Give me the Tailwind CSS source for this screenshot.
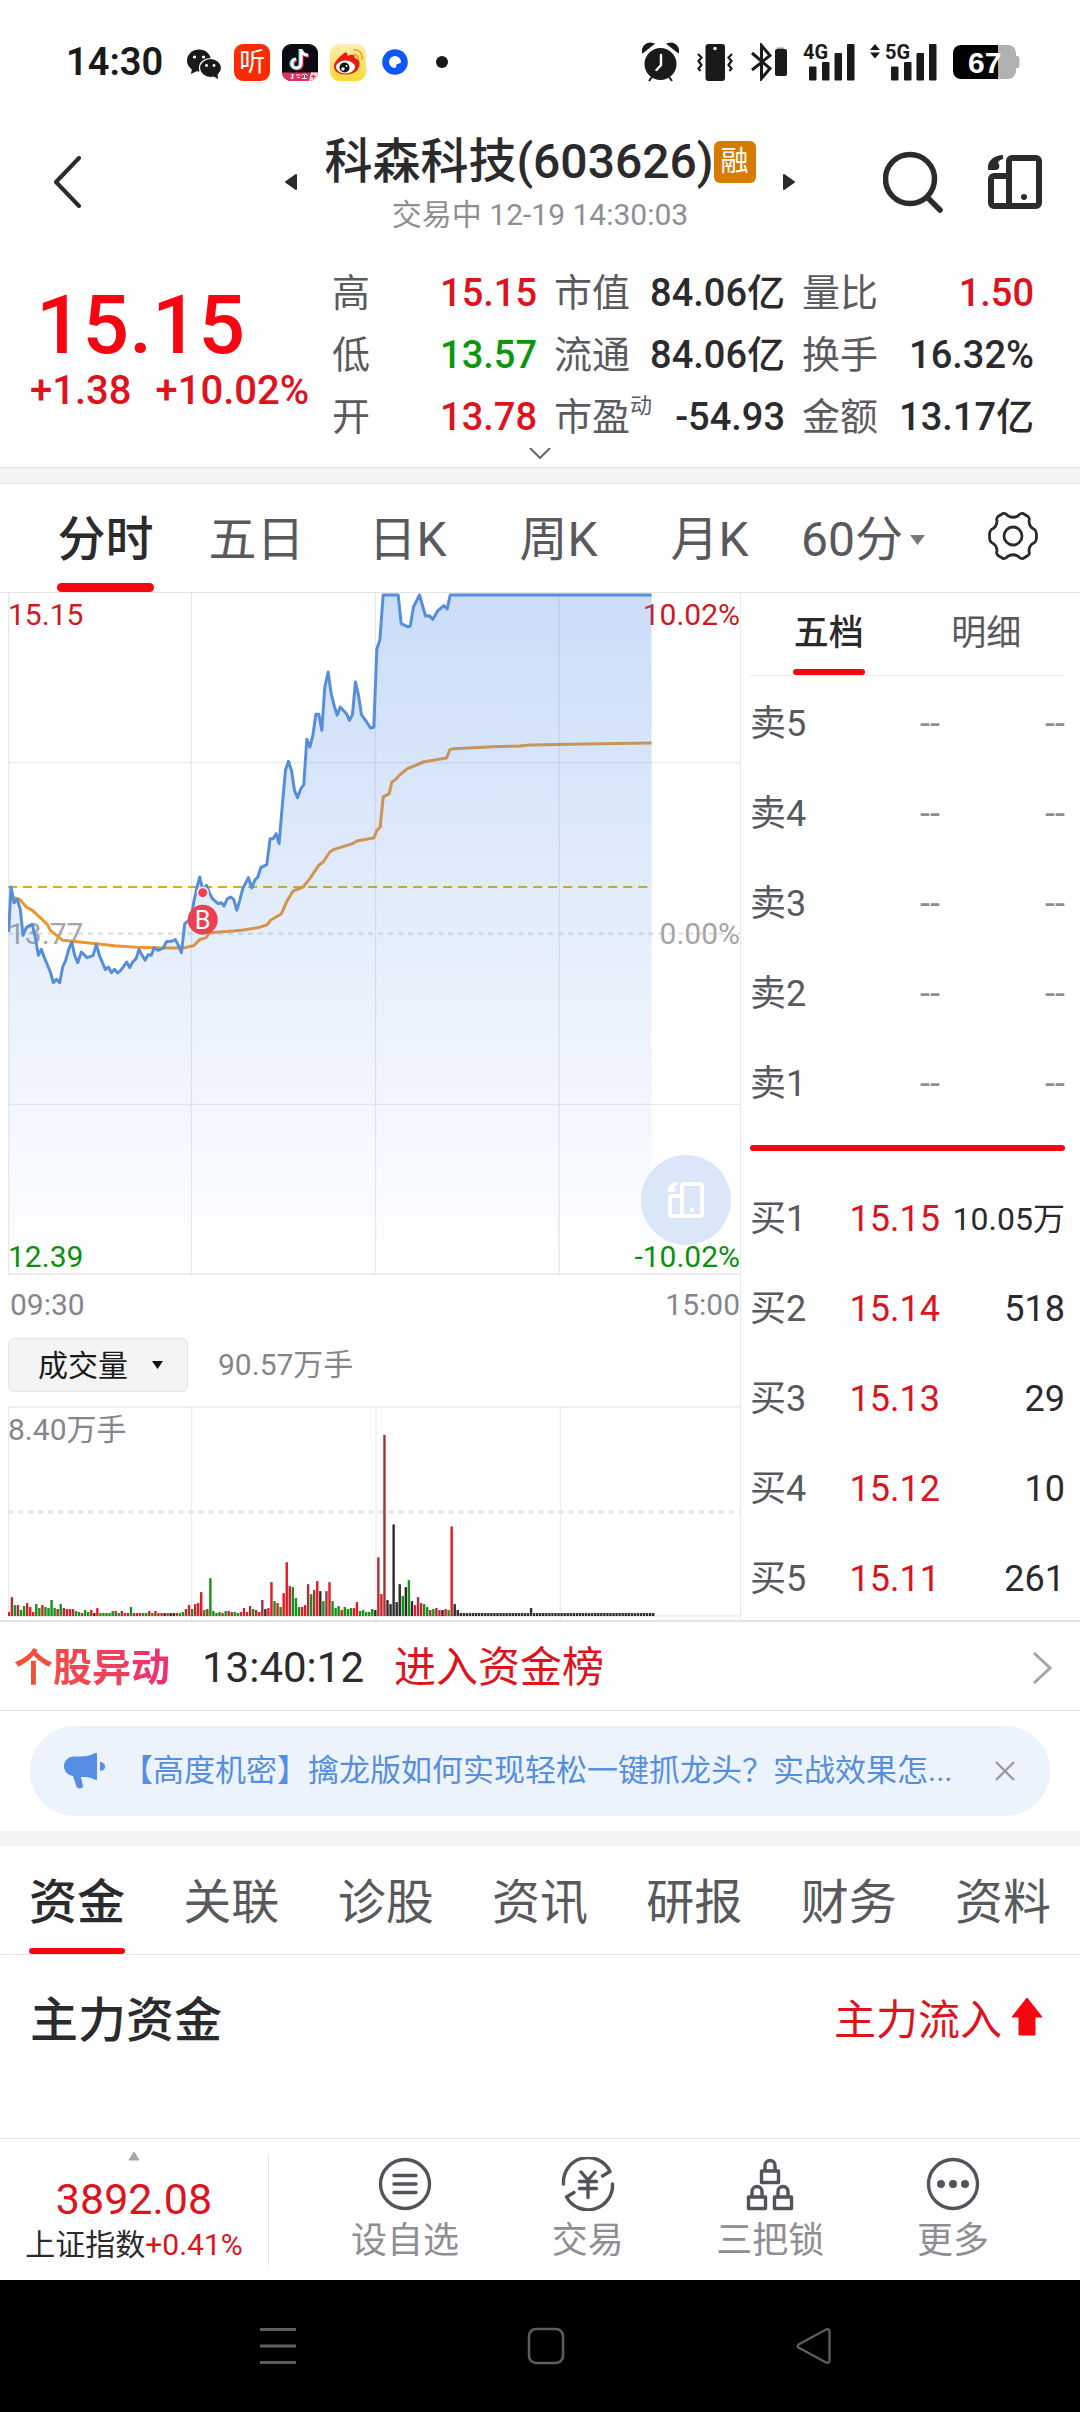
<!DOCTYPE html>
<html lang="zh-CN">
<head>
<meta charset="utf-8">
<meta name="viewport" content="width=device-width, initial-scale=1">
<title>科森科技(603626)</title>
<script src="https://cdn.jsdelivr.net/npm/@tailwindcss/browser@4"></script>
</head>
<body class="bg-white font-['Roboto','Noto_Sans_CJK_SC',sans-serif] text-[#2b2b2d]">

<!-- Status bar -->
<div class="flex h-[124px] items-center justify-between pl-[66px] pr-[60px] text-[#1a1a1a]">
  <div class="flex items-center">
    <span class="mr-[23px] text-[38px] leading-[40px] font-semibold">14:30</span>
    <svg class="mr-3 h-[37px] w-[36px]" viewBox="0 0 36 37">
      <ellipse cx="13" cy="16.500" rx="12" ry="11" fill="#1a1a1a"/><path d="M6 24l-1 6 6-3z" fill="#1a1a1a"/>
      <ellipse cx="24.500" cy="24" rx="11" ry="9.500" fill="#1a1a1a" stroke="#fff" stroke-width="1.200"/><path d="M27 32l5 3-.5-5z" fill="#1a1a1a"/>
      <circle cx="8.500" cy="13" r="1.600" fill="#fff"/><circle cx="17.500" cy="13" r="1.600" fill="#fff"/>
      <circle cx="20.500" cy="21.500" r="1.400" fill="#fff"/><circle cx="28" cy="21.500" r="1.400" fill="#fff"/>
    </svg>
    <span class="mr-3 flex h-[37px] w-[36px] items-center justify-center rounded-[9px] bg-[#fc2b04] text-[26px] leading-[36px] text-white">听</span>
    <svg class="mr-3 h-[37px] w-[36px]" viewBox="0 0 36 37">
      <defs><clipPath id="tk"><rect width="36" height="37" rx="9"/></clipPath></defs>
      <g clip-path="url(#tk)"><rect width="36" height="37" fill="#0c0b14"/>
      <path d="M18 5v14.500a4.500 4.500 0 1 1-5-4.500M18 6c1 3 3.500 5 7 5" fill="none" stroke="#25f4ee" stroke-width="3"/>
      <path d="M20 6v14.500a4.500 4.500 0 1 1-5-4.500M20 7c1 3 3.500 5 7 5" fill="none" stroke="#fe2c55" stroke-width="3"/>
      <path d="M19 5v14.500a4.500 4.500 0 1 1-5-4.500M19 6c1 3 3.500 5 7 5" fill="none" stroke="#fff" stroke-width="3"/>
      <path d="M0 28.500h36V37H0z" fill="#dd3360"/><path d="M29 28.500h7V37h-9z" fill="#fde4d6"/>
      <path d="M9 31h3M8.500 34h3M10.500 30v5M14 31h4M15 33.500h3M19.500 31.500l3-1.500 3 1.500M20 34.500h5M22.500 31v3" stroke="#fff" stroke-width="1"/><path d="M31.500 30.500v4M29.500 32.500h4" stroke="#dd3360" stroke-width="1.400"/></g>
    </svg>
    <svg class="mr-[16px] h-[37px] w-[36px]" viewBox="0 0 36 37">
      <defs><linearGradient id="wb" x2="0" y2="1"><stop stop-color="#fdeeb4"/><stop offset="1" stop-color="#fdd835"/></linearGradient></defs>
      <rect width="36" height="37" rx="9" fill="url(#wb)"/>
      <path d="M13 10c3-3 5-1 4.500 2 4-2 8-2 7 2 5 1 5.500 4 5 7-1 6-6 9.500-13 9.500S4 28 4 22.500C4 18 9 13 13 10z" fill="#e3200f"/>
      <ellipse cx="15.500" cy="23" rx="9.500" ry="6.500" fill="#fff"/><circle cx="14.500" cy="23.500" r="5" fill="#111"/><circle cx="13" cy="25" r="1.700" fill="#fff"/><circle cx="16.500" cy="22" r=".9" fill="#fff"/>
      <path d="M24 6c5-1 9 4 8 9M24 10.500c3 0 4.500 2 4 4.500" fill="none" stroke="#f3a71c" stroke-width="1.800" stroke-linecap="round"/>
    </svg>
    <svg class="mr-7 h-[26px] w-[26px]" viewBox="0 0 26 26"><circle cx="13" cy="13" r="12.800" fill="#0f55fb"/><path d="M13 7a6 6 0 0 1 6 6c0 1-1.500 1.500-3.500 2s-.5 3.500-2.500 4a6 6 0 0 1 0-12z" fill="#fff"/></svg>
    <span class="h-3 w-3 rounded-full bg-[#1a1a1a]"></span>
  </div>
  <div class="flex items-center">
    <svg class="mr-[18px] h-[40px] w-[37px]" viewBox="0 0 37 40" fill="#1a1a1a"><circle cx="18.500" cy="22" r="16"/><path d="M1 10C0 4 6 0 11 2zM36 10c1-6-5-10-10-8zM7 39l5-7M30 39l-5-7" stroke="#1a1a1a" stroke-width="2"/><path d="M19 13v10l-4.500 5" fill="none" stroke="#fff" stroke-width="2.400" stroke-linecap="round"/></svg>
    <svg class="mr-[18px] h-[38px] w-[36px]" viewBox="0 0 36 38"><rect x="8.500" y="1" width="19.500" height="37" rx="3" fill="#1a1a1a"/><circle cx="18" cy="5.500" r="1.700" fill="#fff"/><path d="M1 11l3.500 3.500L1.500 18l3 4-3 3.500 2 2.500M35 11l-3.500 3.500 3 3.500-3 4 3 3.500-2 2.500" fill="none" stroke="#1a1a1a" stroke-width="2.200"/></svg>
    <svg class="mr-4 h-[38px] w-[36px]" viewBox="0 0 36 38"><path d="M1 10l18 15.500-8.500 10V2.500L19 12.500 1 27" fill="none" stroke="#1a1a1a" stroke-width="3"/><path d="M26 7V4.500h7V7z" fill="#999"/><rect x="24" y="6" width="12" height="27" rx="2" fill="#1a1a1a"/></svg>
    <svg class="mr-[15px] h-[38px] w-[52px] overflow-visible" viewBox="0 0 52 38" fill="#1a1a1a"><text x="0" y="16" font-family="Roboto" font-weight="700" font-size="20">4G</text><rect x="6" y="23.500" width="7.500" height="14" rx="1"/><rect x="19" y="19" width="7.500" height="18.500" rx="1"/><rect x="31.500" y="10" width="7.500" height="27.500" rx="1"/><rect x="44" y="1" width="7.500" height="36.500" rx="1"/></svg>
    <svg class="mr-4 h-[38px] w-[67px] overflow-visible" viewBox="0 0 67 38" fill="#1a1a1a"><path d="M0 7l5-6 5 6zM0 9.500l5 6 5-6z"/><text x="15" y="16" font-family="Roboto" font-weight="700" font-size="20">5G</text><rect x="21" y="23.500" width="7.500" height="14" rx="1"/><rect x="34" y="19" width="7.500" height="18.500" rx="1"/><rect x="46.500" y="10" width="7.500" height="27.500" rx="1"/><rect x="59" y="1" width="7.500" height="36.500" rx="1"/></svg>
    <svg class="h-[36px] w-[67px]" viewBox="0 0 67 36"><rect x="40" y="1" width="23" height="34" rx="8" fill="#b1b1b1"/><rect x="60" y="12" width="6.500" height="12" rx="2.500" fill="#b1b1b1"/><path d="M8 1h37v34H8a8 8 0 0 1-8-8V9a8 8 0 0 1 8-8z" fill="#000"/><text x="15" y="29" font-family="Liberation Sans" font-weight="700" font-size="30" fill="#fff">67</text></svg>
  </div>
</div>

<!-- Title bar -->
<header class="grid h-[116px] grid-cols-[1fr_auto_1fr] items-center px-[54px]">
  <button aria-label="返回" class="justify-self-start"><svg class="h-[52px] w-[28px]" viewBox="0 0 28 52"><path d="M25 2L2 26l23 24" fill="none" stroke="#2b2b2d" stroke-width="4" stroke-linecap="round" stroke-linejoin="round"/></svg></button>
  <div class="flex items-center gap-[27px]">
    <button aria-label="上一只"><svg class="h-4 w-3" viewBox="0 0 12 16"><path d="M11 1v14L1 8z" fill="#2b2b2d" stroke="#2b2b2d" stroke-width="2" stroke-linejoin="round"/></svg></button>
    <div class="flex flex-col items-center gap-[7px] pt-[2px]">
      <h1 class="flex items-center text-[48px] leading-[56px] font-medium">科森科技(603626)<span class="flex h-[42px] w-[42px] items-center justify-center rounded-[6px] bg-[#d67b00] text-[28px] leading-[40px] font-normal text-white">融</span></h1>
      <p class="text-[30px] leading-9 text-[#8e8f93]">交易中 12-19 14:30:03</p>
    </div>
    <button aria-label="下一只"><svg class="h-4 w-3" viewBox="0 0 12 16"><path d="M1 1v14l10-7z" fill="#2b2b2d" stroke="#2b2b2d" stroke-width="2" stroke-linejoin="round"/></svg></button>
  </div>
  <div class="-mr-4 flex items-center gap-[45px] justify-self-end">
    <button aria-label="搜索"><svg class="h-[62px] w-[60px]" viewBox="0 0 60 62"><circle cx="27" cy="28" r="24.500" fill="none" stroke="#2b2b2d" stroke-width="5.500"/><path d="M45 47l12 12" stroke="#2b2b2d" stroke-width="5.500" stroke-linecap="round"/></svg></button>
    <button aria-label="横屏"><svg class="h-[54px] w-[54px]" viewBox="0 0 54 54"><g fill="none" stroke="#2b2b2d" stroke-width="6"><rect x="21" y="3" width="30" height="48" rx="3"/><path d="M21 21H6a3 3 0 0 0-3 3v24a3 3 0 0 0 3 3h18"/></g><circle cx="36" cy="42" r="3" fill="#2b2b2d"/><path d="M15 0C7 0 0 5 0 12v3h8a4 4 0 0 0 2-7c0-2 2-3 5-4z" fill="#2b2b2d"/></svg></button>
  </div>
</header>

<!-- Quote summary -->
<section class="flex pt-[22px] pr-[46px] pl-[30px]">
  <div class="w-[302px] flex-none pt-[16px]">
    <div class="pl-[6px] text-[82px] leading-[94px] font-medium text-[#f80512]">15.15</div>
    <div class="flex gap-6 text-[40px] leading-[38px] font-medium text-[#dd1420]"><span>+1.38</span><span>+10.02%</span></div>
  </div>
  <div class="flex-1">
    <dl class="grid grid-cols-[205fr_231fr_232fr] gap-x-[17px] text-[38px] leading-[62px] [&>div]:flex [&>div]:justify-between [&_dt]:text-[#5a5b5e] [&_dd]:font-medium">
      <div><dt>高</dt><dd class="text-[#dd1420]">15.15</dd></div>
      <div><dt>市值</dt><dd>84.06亿</dd></div>
      <div><dt>量比</dt><dd class="text-[#dd1420]">1.50</dd></div>
      <div><dt>低</dt><dd class="text-[#0c960c]">13.57</dd></div>
      <div><dt>流通</dt><dd>84.06亿</dd></div>
      <div><dt>换手</dt><dd>16.32%</dd></div>
      <div><dt>开</dt><dd class="text-[#dd1420]">13.78</dd></div>
      <div><dt class="flex">市盈<span class="text-[22px] leading-[40px]">动</span></dt><dd>-54.93</dd></div>
      <div><dt>金额</dt><dd>13.17亿</dd></div>
    </dl>
  </div>
</section>
<div class="flex h-[19px] justify-center"><button aria-label="展开" class="h-3 w-[22px]"><svg class="h-3 w-[22px]" viewBox="0 0 22 12"><path d="M1 0l10 10L21 0" fill="none" stroke="#6c6d70" stroke-width="2.200"/></svg></button></div>
<div class="h-[17px] border-y border-[#e4e4e4] bg-[#f4f4f4]"></div>

<!-- Period tabs -->
<nav class="flex h-[109px] items-stretch border-b border-[#e4e4e4] pl-[30px] pr-[42px] text-[48px] leading-[56px] text-[#58595c]">
  <button class="relative w-[151px] pt-1 font-medium text-[#2b2b2d]">分时<span class="absolute inset-x-[27px] bottom-0 h-[9px] rounded-full bg-[#f80512]"></span></button>
  <button class="w-[151px] pt-1">五日</button>
  <button class="w-[151px] pt-1">日K</button>
  <button class="w-[151px] pt-1">周K</button>
  <button class="w-[151px] pt-1">月K</button>
  <label class="relative ml-4 flex items-center pt-1"><select aria-label="周期" class="w-[124px] appearance-none bg-transparent"><option>60分</option></select><svg class="pointer-events-none absolute right-0 h-[10px] w-[15px]" viewBox="0 0 15 10"><path d="M0 0h15L7.500 10z" fill="#77787b"/></svg></label>
  <button aria-label="设置" class="ml-auto pb-1"><svg class="h-[50px] w-[50px]" viewBox="0 0 50 50" fill="none" stroke="#2b2b2d" stroke-width="2.800" stroke-linejoin="round"><path d="M15 2.500Q18 2 19.500 4.500Q25 8 30.500 4.500Q32 2 35 2.500L40 5.500Q42 7 41 10Q41 16 46.500 18.500Q48.500 20 48.500 25Q48.500 30 46.500 31.500Q41 34 41 40Q42 43 40 44.500L35 47.500Q32 48 30.500 45.500Q25 42 19.500 45.500Q18 48 15 47.500L10 44.500Q8 43 9 40Q9 34 3.500 31.500Q1.500 30 1.500 25Q1.500 20 3.500 18.500Q9 16 9 10Q8 7 10 5.500Z"/><circle cx="25" cy="25" r="9"/></svg></button>
</nav>

<!-- Charts and order book -->
<main class="flex border-b-2 border-[#e2e2e2]">
  <div class="flex min-w-0 flex-1 flex-col border-r border-[#e9e9eb] pl-2">
    <div class="relative h-[682px] text-[30px] leading-9">
      <svg class="absolute inset-0 h-full w-full" viewBox="25 38 2195 2046" preserveAspectRatio="none">
        <g stroke="#e9e9eb" stroke-width="4" fill="none"><path d="M27 38v2046M575 38v2046M1127 38v2046M1678 38v2046M25 547h2195M25 1572h2195M25 2081h2195"/></g>
        <path d="M25 1060H2220" stroke="#e4e4e6" stroke-width="8" stroke-dasharray="15 15"/>
      </svg>
      <span class="absolute top-1 left-0 text-[#d01822]">15.15</span>
      <span class="absolute top-1 right-0 text-[#d01822]">10.02%</span>
      <span class="absolute top-1/2 left-0 -translate-y-1/2 text-[#a5a5a7]">13.77</span>
      <span class="absolute top-1/2 right-0 -translate-y-1/2 text-[#a5a5a7]">0.00%</span>
      <svg class="absolute inset-0 h-full w-full" viewBox="25 38 2195 2046" preserveAspectRatio="none">
        <defs><linearGradient id="area" gradientUnits="userSpaceOnUse" x1="0" y1="38" x2="0" y2="2084"><stop stop-color="#4f8de6" stop-opacity=".3"/><stop offset="1" stop-color="#4f8de6" stop-opacity="0"/></linearGradient></defs>
        <path d="M25 920H1955" stroke="#dcab26" stroke-width="6" stroke-dasharray="27 18"/>
        <polyline fill="none" stroke="#ee9530" stroke-width="9" points="34,950 60,957 80,980 98,990 143,1032 152,1050 189,1080 240,1085 290,1090 345,1096 410,1101 463,1102 510,1103 555,1102 582,1096 600,1078 618,1073 630,1057 700,1052 730,1049 780,1041 802,1033 812,1020 845,1000 860,965 880,932 910,920 930,895 957,855 970,845 990,815 1003,807 1058,790 1072,782 1122,773 1131,750 1141,740 1150,650 1168,640 1176,605 1187,598 1196,587 1223,565 1240,558 1270,545 1340,533 1350,508 1362,505 1480,499 1560,497 1590,494 1800,490 1955,488"/>
        <polygon id="fill" fill="url(#area)"/>
        <polyline id="price" fill="none" stroke="#568edc" stroke-width="9" stroke-linejoin="round" points="27,1055 34,920 43,967 53,957 62,988 70,1065 80,1042 98,1032 107,1072 116,1125 125,1107 134,1132 152,1175 161,1207 170,1197 180,1207 189,1160 198,1140 207,1107 216,1085 225,1125 234,1147 245,1115 262,1132 280,1126 290,1092 299,1125 317,1168 326,1160 335,1177 344,1167 354,1178 363,1170 381,1145 390,1162 399,1145 409,1135 418,1107 427,1125 436,1140 445,1123 455,1125 463,1102 475,1110 491,1103 500,1084 518,1082 527,1078 536,1095 545,1117 555,1030 565,1022 575,1010 582,965 592,920 600,890 609,930 620,915 630,940 638,955 655,970 665,967 673,977 683,955 693,950 702,958 711,990 720,960 729,925 746,892 756,923 765,900 774,890 783,862 801,853 811,775 820,775 829,760 838,790 848,670 857,570 866,543 875,570 884,630 893,652 903,625 912,613 921,477 930,500 939,467 948,402 957,402 966,450 975,320 985,275 994,340 1003,375 1012,405 1021,380 1040,400 1049,420 1058,402 1067,305 1076,345 1085,403 1097,420 1112,443 1122,440 1131,205 1140,180 1150,44 1195,44 1204,130 1223,139 1231,138 1241,80 1259,44 1277,107 1288,106 1299,117 1313,92 1332,76 1342,86 1351,44 1955,44"/>
        <circle cx="609" cy="937" r="16" fill="#ee4053" stroke="#e3ecf9" stroke-width="5"/>
        <circle cx="609" cy="1018" r="45" fill="#ee4053"/>
        <text x="609" y="1045" text-anchor="middle" font-family="Roboto" font-size="76" fill="#fff">B</text>
      </svg>
      <span class="absolute bottom-0 left-0 text-[#0c8f0c]">12.39</span>
      <span class="absolute right-0 bottom-0 text-[#0c8f0c]">-10.02%</span>
      <button aria-label="横屏看图" class="absolute right-[9px] bottom-[30px] flex h-[90px] w-[90px] items-center justify-center rounded-full bg-[#d9e5f8]/95"><svg class="h-[36px] w-[36px]" viewBox="0 0 54 54"><g fill="none" stroke="#fff" stroke-width="6"><rect x="21" y="3" width="30" height="48" rx="3"/><path d="M21 21H6a3 3 0 0 0-3 3v24a3 3 0 0 0 3 3h18"/></g><circle cx="36" cy="42" r="3.500" fill="#fff"/><path d="M15 0C7 0 0 5 0 12v3h8a4 4 0 0 0 2-7c0-2 2-3 5-4z" fill="#fff"/></svg></button>
    </div>
    <div class="flex justify-between pt-3 pl-[2px] text-[30px] leading-9 text-[#85868a]"><span>09:30</span><span>15:00</span></div>
    <div class="mt-[15px] flex items-center text-[30px] text-[#85868a]">
      <label class="relative flex items-center"><select aria-label="指标" class="h-[54px] w-[180px] appearance-none rounded-[6px] border border-[#e4e4e4] bg-[#f4f4f4] pl-[29px] text-[#1a1a1a]"><option>成交量</option></select><svg class="pointer-events-none absolute right-[25px] h-[8px] w-[11px]" viewBox="0 0 11 8"><path d="M0 0h11L5.500 8z" fill="#111"/></svg></label>
      <span class="ml-[30px] leading-9">90.57万手</span>
    </div>
    <div class="relative mt-[14px] min-h-[214px] flex-1 text-[30px]">
      <svg class="absolute inset-0 h-full w-full" viewBox="0 0 731 215" preserveAspectRatio="none">
        <path d="M0 1H731M0 211H731" stroke="#f1f1f1" stroke-width="2"/>
        <path d="M.5 0V212M183.500 0V215M367.500 0V215M551.500 0V215" stroke="#e7e7e9"/>
        <path d="M0 106.500H731" stroke="#e4e4e6" stroke-width="3" stroke-dasharray="5 5"/>
        <g id="volume"></g>
      </svg>
      <span class="absolute top-[6px] left-0 leading-9 text-[#85868a]">8.40万手</span>
    </div>
  </div>

  <aside class="-mb-1 w-[339px] flex-none pr-[15px] pl-[9px]">
    <div class="grid h-[83px] grid-cols-2 border-b border-[#e9e9eb] text-[35px] leading-[40px] text-[#58595c]">
      <button class="relative font-medium text-[#2b2b2d]">五档<span class="absolute inset-x-[43px] bottom-0 h-[6px] rounded-full bg-[#f80512]"></span></button>
      <button>明细</button>
    </div>
    <table class="mt-[3px] w-full text-right text-[36px] leading-[42px] [&_td]:p-0 [&_th]:w-[60px] [&_th]:p-0 [&_th]:text-left [&_th]:font-normal [&_th]:whitespace-nowrap [&_th]:text-[#58595c] [&_tr]:h-[90px]">
      <tbody class="text-[#8e8f93]">
        <tr><th scope="row">卖5</th><td>--</td><td>--</td></tr>
        <tr><th scope="row">卖4</th><td>--</td><td>--</td></tr>
        <tr><th scope="row">卖3</th><td>--</td><td>--</td></tr>
        <tr><th scope="row">卖2</th><td>--</td><td>--</td></tr>
        <tr><th scope="row">卖1</th><td>--</td><td class="w-[125px]">--</td></tr>
      </tbody>
    </table>
    <div class="mt-[16px] mb-[23px] h-[6px] rounded-full bg-[#f80512]"></div>
    <table class="w-full text-right text-[36px] leading-[42px] [&_td]:p-0 [&_th]:w-[60px] [&_th]:p-0 [&_th]:text-left [&_th]:font-normal [&_th]:whitespace-nowrap [&_th]:text-[#58595c] [&_tr]:h-[90px]">
      <tbody>
        <tr><th scope="row">买1</th><td class="text-[#dd1420]">15.15</td><td class="w-[125px] text-[32px]">10.05万</td></tr>
        <tr><th scope="row">买2</th><td class="text-[#dd1420]">15.14</td><td>518</td></tr>
        <tr><th scope="row">买3</th><td class="text-[#dd1420]">15.13</td><td>29</td></tr>
        <tr><th scope="row">买4</th><td class="text-[#dd1420]">15.12</td><td>10</td></tr>
        <tr><th scope="row">买5</th><td class="text-[#dd1420]">15.11</td><td>261</td></tr>
      </tbody>
    </table>
  </aside>
</main>

<!-- Unusual movement -->
<a href="#" class="flex h-[89px] items-center border-b border-[#e4e4e4] pt-[3px] pr-7 pl-[14px] text-[42px] leading-[50px]">
  <span class="bg-gradient-to-r from-[#f5522d] to-[#ee2e72] bg-clip-text text-[39px] font-bold text-transparent">个股异动</span>
  <span class="ml-8">13:40:12</span>
  <span class="ml-[30px] text-[#dd1420]">进入资金榜</span>
  <svg class="ml-auto h-[34px] w-[20px]" viewBox="0 0 20 34"><path d="M2 2l16 15L2 32" fill="none" stroke="#a5a5a7" stroke-width="3"/></svg>
</a>

<div class="px-[30px] py-[15px]">
  <div class="flex h-[90px] items-center rounded-[45px] bg-[#ecf3fc] pr-[35px] pl-[33px]">
    <svg class="h-[36px] w-[43px] flex-none" viewBox="0 0 43 36" fill="#568ee6"><path d="M34 .8v25.500c0 .8-1 1-2 .5C28 24.500 25 24 18 24l2 9c.5 3-5.500 3.500-6.500.5L10 23C4 22 1 18 1 13S5 3.500 11 3.500c9 0 15 0 20-3 1.500-.8 3-.8 3 .3z"/><path d="M37 9c6 0 7.500 9 0 9z"/></svg>
    <a href="#" class="ml-4 flex-1 truncate text-[31px] leading-[40px] text-[#568ee0]">【高度机密】擒龙版如何实现轻松一键抓龙头？实战效果怎...</a>
    <button aria-label="关闭" class="ml-10"><svg class="h-[20px] w-[20px]" viewBox="0 0 20 20"><path d="M1 1l18 18M19 1L1 19" stroke="#9a9a9d" stroke-width="2.400"/></svg></button>
  </div>
</div>
<div class="h-[15px] bg-[#f4f4f4]"></div>

<!-- Information tabs -->
<nav class="flex h-[109px] justify-between border-b border-[#e4e4e4] px-[29px] text-[48px] leading-[56px] text-[#58595c] [&>button]:pt-[6px]">
  <button class="relative font-medium text-[#2b2b2d]">资金<span class="absolute inset-x-0 bottom-0 h-[6px] rounded-full bg-[#f80512]"></span></button>
  <button>关联</button>
  <button>诊股</button>
  <button>资讯</button>
  <button>研报</button>
  <button>财务</button>
  <button>资料</button>
</nav>

<section class="flex h-[183px] items-start justify-between pt-[38px] pr-[37px] pl-[30px]">
  <h2 class="text-[48px] leading-[56px] font-medium">主力资金</h2>
  <div class="flex items-center gap-[9px] text-[42px] leading-[56px] text-[#dd1420]">主力流入<svg class="-mt-2 h-[40px] w-[32px]" viewBox="0 0 32 40"><path d="M16 1l15 19h-7v18H8V20H1z" fill="#f80512" stroke="#f80512" stroke-linejoin="round"/></svg></div>
</section>

<!-- Toolbar -->
<footer class="flex h-[142px] items-center border-t border-[#e4e4e4]">
  <button class="flex h-full w-[268px] flex-col items-center pt-3">
    <svg class="h-[10px] w-3" viewBox="0 0 12 10"><path d="M6 1l5 8H1z" fill="#a5a6a9" stroke="#a5a6a9" stroke-linejoin="round"/></svg>
    <span class="mt-3 text-[43px] leading-[52px] text-[#dd1420]">3892.08</span>
    <span class="text-[30px] leading-[40px]">上证指数<span class="text-[#dd1420]">+0.41%</span></span>
  </button>
  <span class="h-[111px] w-px bg-[#e4e4e4]"></span>
  <div class="flex flex-1 justify-between pr-[91px] pl-[82px] text-[36px] leading-[44px] text-[#8e8f93] [&>button]:flex [&>button]:flex-col [&>button]:items-center [&>button]:gap-[8px] [&_svg]:h-[54px] [&_svg]:w-[54px]">
    <button><svg viewBox="0 0 54 54" fill="none" stroke="#53545b" stroke-width="3.400" stroke-linecap="round"><circle cx="27" cy="27" r="24.500"/><path d="M16 18.500h22M16 27h22M16 35.500h22"/></svg>设自选</button>
    <button><svg viewBox="0 0 54 54" fill="none" stroke="#53545b" stroke-width="3.400" stroke-linecap="round" stroke-linejoin="round"><path d="M2.500 27A24.500 24.500 0 0 1 49 14.500L41.500 19M51.500 27A24.500 24.500 0 0 1 5.500 40L13 35.500M20 15l7 8 7-8M27 23v17.500M18.500 24.500h17M18.500 31.500h17"/></svg>交易</button>
    <button><svg viewBox="0 0 54 54" fill="none" stroke="#53545b" stroke-width="3.400" stroke-linejoin="round"><rect x="18.500" y="14" width="17" height="11.500"/><path d="M22 14V8.500a5 5 0 0 1 10 0V14"/><rect x="5.500" y="40" width="17" height="11.500"/><path d="M9 40v-5.500a5 5 0 0 1 10 0V40"/><rect x="31.500" y="40" width="17" height="11.500"/><path d="M35 40v-5.500a5 5 0 0 1 10 0V40"/></svg>三把锁</button>
    <button><svg viewBox="0 0 54 54" fill="none" stroke="#53545b" stroke-width="3.400"><circle cx="27" cy="27" r="24.500"/><g fill="#53545b" stroke="none"><circle cx="15" cy="27" r="4"/><circle cx="27" cy="27" r="4"/><circle cx="39" cy="27" r="4"/></g></svg>更多</button>
  </div>
</footer>

<!-- System navigation -->
<div class="flex h-[132px] items-center justify-center gap-[231px] bg-black pl-3">
  <button aria-label="菜单"><svg class="h-[38px] w-[36px]" viewBox="0 0 36 38"><path d="M0 2.500h36M0 19h36M0 35.500h36" stroke="#5e5e5e" stroke-width="3"/></svg></button>
  <button aria-label="主页"><svg class="h-[38px] w-[38px]" viewBox="0 0 38 38"><rect x="2" y="2" width="34" height="34" rx="7" fill="none" stroke="#5e5e5e" stroke-width="2.500"/></svg></button>
  <button aria-label="后退"><svg class="h-[38px] w-[36px]" viewBox="0 0 36 38"><path d="M2.500 17.500L30 2.500q3.500-1 3.500 2v29q0 3-3.500 2L2.500 20.500q-1.500-1.500 0-3z" fill="none" stroke="#5e5e5e" stroke-width="2.300"/></svg></button>
</div>

<script>
  // Shade the area below the price line
  const price = document.getElementById('price');
  document.getElementById('fill').setAttribute('points', price.getAttribute('points') + ' 1955,2084 27,2084');

  // One volume bar per minute: height and colour (r up, d strong up, g down, k flat)
  const bars = ('4r 19d 11g 11d 6g 10g 13r 9r 4r 12g 8g 11r 9g 8g 16g 8g 7d 12g 8d 7r 7d 7r 5g 4g 3r 6g 4g 6r 3k 8r 3g 3g 3g 3g 5g 5d 3g 5d 3r 3d 9g 3d 3r 3r 3g 3g 5r 3g 5r 3d 3r 3k 3r 3k 3k 3r 3g 4g ' +
    '7d 11r 7g 12r 13r 24r 6g 7d 38g 5g 3g 4g 3r 5g 5d 4r 4g 3g 4r 8d 4r 10d 7g 6d 4r 16d 7k 8r 34r 15g 13r 9g 23r 54r 30r 29g 18g 9g 9r 11r 32d 22g 26d 35r 25k 15g 25d 34r 15g 8g 10g 6r 9g 7g 8g 8r 14r 5g 6g 4g 4g 7g 6k ' +
    '59d 22r 182d 16k 12k 92k 14k 32k 20g 29k 36g 15k 11r 19d 13r 12g 9g 6d 7g 8d 6r 6k 7r 6g 90r 12k 6k').split(' ');
  while (bars.length < 212) bars.push(bars.length === 171 ? '8k' : '3k');
  const colors = { r: '#e01a26', d: '#a8303a', g: '#16921a', k: '#2c2c2e' };
  document.getElementById('volume').innerHTML = bars.map((b, i) => {
    const h = parseInt(b);
    return `<rect x="${(i * 3.05 - 0.4).toFixed(2)}" y="${211 - h}" width="2.4" height="${h}" fill="${colors[b.slice(-1)]}"/>`;
  }).join('');
</script>
</body>
</html>
